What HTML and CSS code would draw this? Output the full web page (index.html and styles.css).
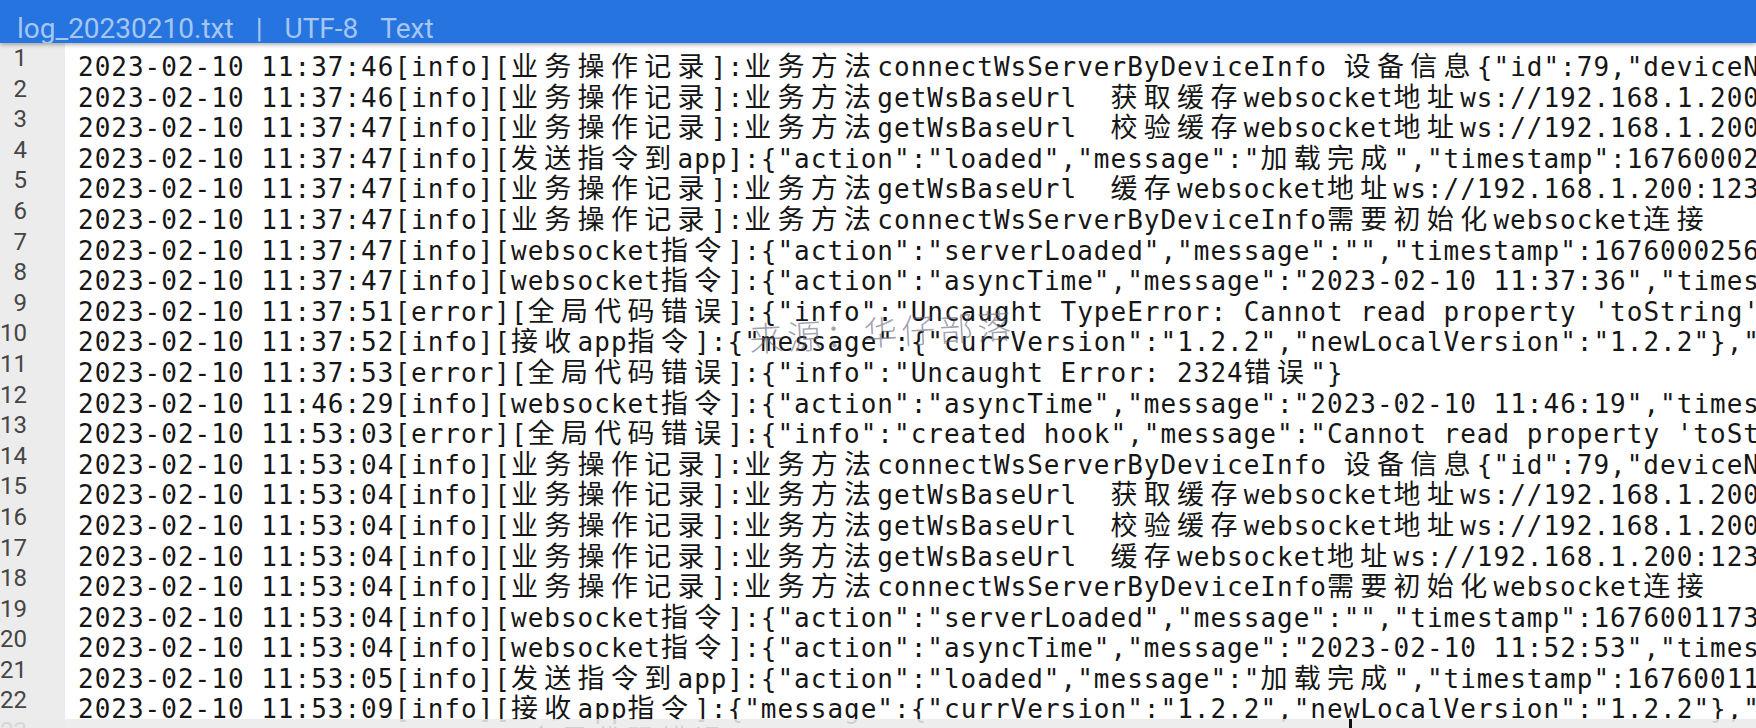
FILE: index.html
```html
<!DOCTYPE html>
<html lang="zh-CN">
<head>
  <meta charset="UTF-8">
  <meta name="viewport" content="width=device-width, initial-scale=1">
  <title>log_20230210.txt</title>
  <link rel="stylesheet" href="styles.css">
</head>
<body>

  <div class="cabecera">
    <span>log_20230210.txt</span>
    <span>|</span>
    <span>UTF-8</span>
    <span>Text</span>
  </div>

  <div class="visor">
    <div class="numeros">
      <div>1</div><div>2</div><div>3</div><div>4</div><div>5</div><div>6</div>
      <div>7</div><div>8</div><div>9</div><div>10</div><div>11</div><div>12</div>
      <div>13</div><div>14</div><div>15</div><div>16</div><div>17</div><div>18</div>
      <div>19</div><div>20</div><div>21</div><div>22</div><div>23</div>
    </div>

    <div class="texto">
<div class="ln">2023-02-10 11:37:46[info][<span class="c">业务操作记录</span>]:<span class="c">业务方法</span>connectWsServerByDeviceInfo <span class="c">设备信息</span>{"id":79,"deviceName":"</div>
<div class="ln">2023-02-10 11:37:46[info][<span class="c">业务操作记录</span>]:<span class="c">业务方法</span>getWsBaseUrl  <span class="c">获取缓存</span>websocket<span class="c">地址</span>ws://192.168.1.200:1234</div>
<div class="ln">2023-02-10 11:37:47[info][<span class="c">业务操作记录</span>]:<span class="c">业务方法</span>getWsBaseUrl  <span class="c">校验缓存</span>websocket<span class="c">地址</span>ws://192.168.1.200:1234</div>
<div class="ln">2023-02-10 11:37:47[info][<span class="c">发送指令到</span>app]:{"action":"loaded","message":"<span class="c">加载完成</span>","timestamp":1676000256801}</div>
<div class="ln">2023-02-10 11:37:47[info][<span class="c">业务操作记录</span>]:<span class="c">业务方法</span>getWsBaseUrl  <span class="c">缓存</span>websocket<span class="c">地址</span>ws://192.168.1.200:1234</div>
<div class="ln">2023-02-10 11:37:47[info][<span class="c">业务操作记录</span>]:<span class="c">业务方法</span>connectWsServerByDeviceInfo<span class="c">需要初始化</span>websocket<span class="c">连接</span></div>
<div class="ln">2023-02-10 11:37:47[info][websocket<span class="c">指令</span>]:{"action":"serverLoaded","message":"","timestamp":1676000256950}</div>
<div class="ln">2023-02-10 11:37:47[info][websocket<span class="c">指令</span>]:{"action":"asyncTime","message":"2023-02-10 11:37:36","timestamp"</div>
<div class="ln">2023-02-10 11:37:51[error][<span class="c">全局代码错误</span>]:{"info":"Uncaught TypeError: Cannot read property 'toString' of</div>
<div class="ln">2023-02-10 11:37:52[info][<span class="c">接收</span>app<span class="c">指令</span>]:{"message":{"currVersion":"1.2.2","newLocalVersion":"1.2.2"},"</div>
<div class="ln">2023-02-10 11:37:53[error][<span class="c">全局代码错误</span>]:{"info":"Uncaught Error: 2324<span class="c">错误</span>"}</div>
<div class="ln">2023-02-10 11:46:29[info][websocket<span class="c">指令</span>]:{"action":"asyncTime","message":"2023-02-10 11:46:19","timestamp"</div>
<div class="ln">2023-02-10 11:53:03[error][<span class="c">全局代码错误</span>]:{"info":"created hook","message":"Cannot read property 'toString'</div>
<div class="ln">2023-02-10 11:53:04[info][<span class="c">业务操作记录</span>]:<span class="c">业务方法</span>connectWsServerByDeviceInfo <span class="c">设备信息</span>{"id":79,"deviceName":"</div>
<div class="ln">2023-02-10 11:53:04[info][<span class="c">业务操作记录</span>]:<span class="c">业务方法</span>getWsBaseUrl  <span class="c">获取缓存</span>websocket<span class="c">地址</span>ws://192.168.1.200:1234</div>
<div class="ln">2023-02-10 11:53:04[info][<span class="c">业务操作记录</span>]:<span class="c">业务方法</span>getWsBaseUrl  <span class="c">校验缓存</span>websocket<span class="c">地址</span>ws://192.168.1.200:1234</div>
<div class="ln">2023-02-10 11:53:04[info][<span class="c">业务操作记录</span>]:<span class="c">业务方法</span>getWsBaseUrl  <span class="c">缓存</span>websocket<span class="c">地址</span>ws://192.168.1.200:1234</div>
<div class="ln">2023-02-10 11:53:04[info][<span class="c">业务操作记录</span>]:<span class="c">业务方法</span>connectWsServerByDeviceInfo<span class="c">需要初始化</span>websocket<span class="c">连接</span></div>
<div class="ln">2023-02-10 11:53:04[info][websocket<span class="c">指令</span>]:{"action":"serverLoaded","message":"","timestamp":1676001173950}</div>
<div class="ln">2023-02-10 11:53:04[info][websocket<span class="c">指令</span>]:{"action":"asyncTime","message":"2023-02-10 11:52:53","timestamp"</div>
<div class="ln">2023-02-10 11:53:05[info][<span class="c">发送指令到</span>app]:{"action":"loaded","message":"<span class="c">加载完成</span>","timestamp":1676001185120}</div>
<div class="ln">2023-02-10 11:53:09[info][<span class="c">接收</span>app<span class="c">指令</span>]:{"message":{"currVersion":"1.2.2","newLocalVersion":"1.2.2"},"</div>
<div class="ln">2023-02-10 11:53:10[error][<span class="c">全局代码错误</span>]:{"info":"Uncaught TypeError: Cannot read property</div>
    </div>

    <!-- marca de agua -->
    <div class="marca">来源：华仔部落</div>

    <!-- barra inferior con cursor -->
    <div class="barra-inferior"><span class="cursor"></span></div>
  </div>

</body>
</html>
```

FILE: styles.css
```css
:root {
  --azul: #2574e0;
  --gutter: #ececec;
  --texto: #161616;
  --numero: #454545;
}

* {
  box-sizing: border-box;
}

html, body {
  margin: 0;
  width: 1756px;
  height: 728px;
  overflow: hidden;
  background: white;
}

.cabecera {
  position: relative;
  z-index: 2;
  height: 43px;
  padding: 7px 0 0 17px;
  background: var(--azul);
  box-shadow: 0 2px 4px rgba(0,0,0,0.3);
  display: flex;
  gap: 22px;
  font-family: Roboto, "Noto Sans", sans-serif;
  font-size: 28px;
  line-height: 43px;
  color: rgba(255,255,255,0.6);
  overflow: hidden;
  white-space: nowrap;
}

.visor {
  position: relative;
  display: flex;
  height: 685px;
  overflow: hidden;
}

.numeros {
  flex: 0 0 65px;
  background: var(--gutter);
  padding-right: 38px;
  text-align: right;
  font-family: Roboto, "Noto Sans", sans-serif;
  font-size: 24px;
  line-height: 30.6px;
  color: var(--numero);
  white-space: nowrap;
}

.numeros div {
  height: 30.6px;
}

.texto {
  flex: 1;
  padding: 8px 0 0 13px;
  overflow: hidden;
  font-family: "DejaVu Sans Mono", "Liberation Mono", monospace;
  font-size: 26px;
  letter-spacing: 1px;
  line-height: 30.6px;
  color: var(--texto);
}

.ln {
  height: 30.6px;
  white-space: pre;
}

.c {
  font-family: "Noto Sans CJK SC", sans-serif;
  font-size: 27px;
  letter-spacing: 6.3px;
  line-height: 1;
}

.marca {
  position: absolute;
  left: 748px;
  top: 270px;
  font-family: "Noto Sans CJK SC", sans-serif;
  font-size: 34px;
  font-weight: 300;
  letter-spacing: 4px;
  color: rgba(100,100,125,0.6);
  transform: rotate(-3deg);
  transform-origin: left top;
  white-space: nowrap;
}

.barra-inferior {
  position: absolute;
  left: 0;
  right: 0;
  bottom: 0;
  height: 9px;
  background: rgba(234,234,234,0.88);
}

.cursor {
  position: absolute;
  left: 1349px;
  top: 0;
  width: 3px;
  height: 9px;
  background: #111;
}
```
